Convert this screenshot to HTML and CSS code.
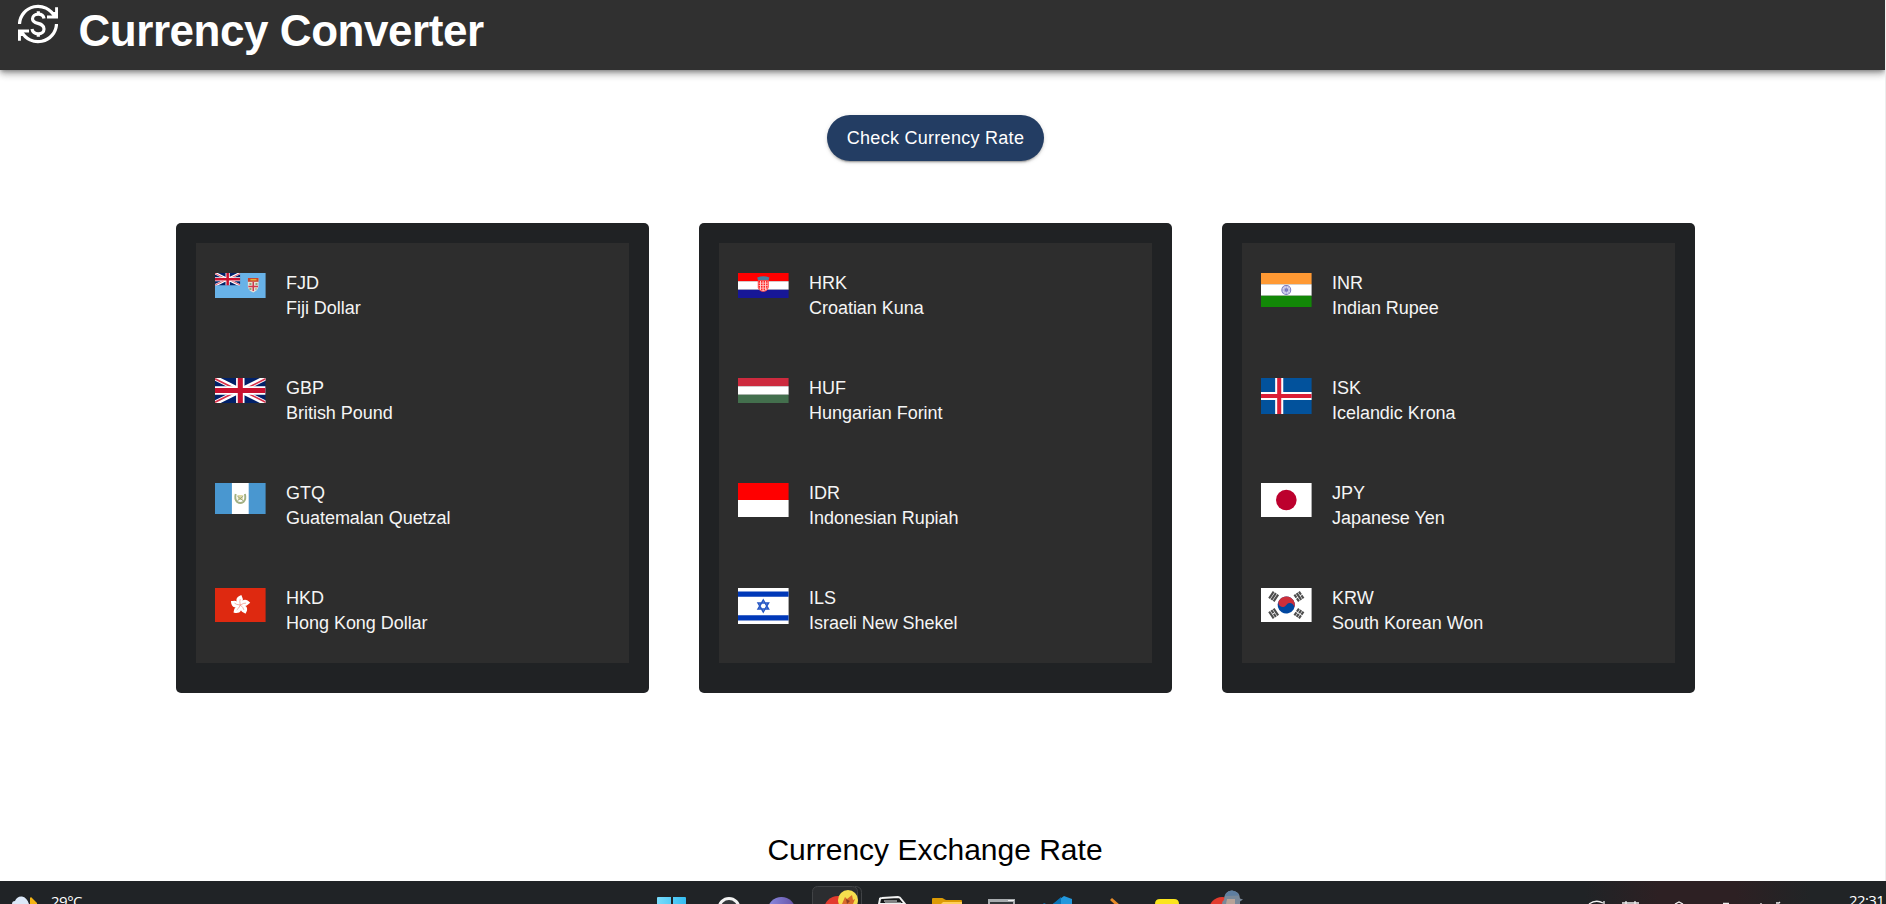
FILE: index.html
```html
<!DOCTYPE html>
<html lang="en">
<head>
<meta charset="utf-8">
<title>Currency Converter</title>
<link rel="stylesheet" href="styles.css">
</head>
<body>
<svg class="defs" width="0" height="0" aria-hidden="true">
  <symbol id="union" viewBox="0 0 60 30" preserveAspectRatio="none">
    <rect width="60" height="30" fill="#012169"/>
    <path d="M0 0L60 30M60 0L0 30" stroke="#fff" stroke-width="6"/>
    <path d="M0 1L28 15M60 1L32 15M0 29L28 15M60 29L32 15" stroke="#d8304a" stroke-width="2"/>
    <path d="M30 0V30M0 15H60" stroke="#fff" stroke-width="10"/>
    <path d="M30 0V30M0 15H60" stroke="#c8102e" stroke-width="6"/>
  </symbol>
</svg>
<div class="page">
<header class="header">
  <svg class="logo" viewBox="0 0 40 40" fill="none" stroke="#fff" stroke-width="3.2">
    <path d="M1.500 20A18.500 18.500 0 0 1 36.500 12.500M38.500 20A18.500 18.500 0 0 1 3.500 27.500"/>
    <path d="M38.700 3.300V13H29M1.300 36.700V27H11" stroke-width="3.200"/>
    <path d="M32 8L38 8V13zM8 32L2 32V27z" fill="#fff" stroke="none"/>
    <path d="M26 14.500C25.500 11.500 23.500 10.200 20.300 10.200C17 10.200 14.500 12 14.500 14.800C14.500 21.500 26 17.200 26 25C26 28 23.500 29.800 20.300 29.800C17 29.800 14.500 28 14 25M20.300 7.200V11M20.300 29V32.800" stroke-width="3.200"/>
  </svg>
  <h1 class="title">Currency Converter</h1>
</header>
<main class="main">
  <button class="check">Check Currency Rate</button>
  <div class="cards">
    <section class="card"><div class="list">
      <div class="row"><svg class="flag" height="25" viewBox="0 0 50 25" preserveAspectRatio="none"><rect width="50" height="25" fill="#68b2e8"/><use href="#union" width="25" height="12.500"/><path d="M32.500 5h10.500v9q-1 4-5.200 5.500q-4.300-1.500-5.300-5.500z" fill="#e6dfd5"/><path d="M32.500 5h10.500v3.800h-10.500z" fill="#c8432e"/><path d="M35 6.700h6" stroke="#e6ae32" stroke-width="1.500"/><path d="M37.800 9v9M33 13.500h9.500" stroke="#cf3a4b" stroke-width="1.500"/><path d="M34 11h2M40 11h2M34 16h2M40 16h1" stroke="#76955f" stroke-width="1.500"/></svg><div class="name">FJD<br>Fiji Dollar</div></div>
      <div class="row"><svg class="flag" height="25" viewBox="0 0 50 25" preserveAspectRatio="none"><use href="#union" width="50" height="25"/></svg><div class="name">GBP<br>British Pound</div></div>
      <div class="row"><svg class="flag" height="31" viewBox="0 0 50 31" preserveAspectRatio="none"><rect width="50" height="31" fill="#4997d0"/><path d="M16.700 0h16.600v31H16.700z" fill="#fff"/><path d="M20.500 11q-1.500 5 1.500 8q3 2 6 0q3-3 1.500-8" fill="none" stroke="#a2b083" stroke-width="1.900"/><path d="M22.500 12h5v5h-5z" fill="#ded9a3"/><path d="M22 18l6-5M28 18l-6-5" stroke="#8c9b78" stroke-width=".8"/></svg><div class="name">GTQ<br>Guatemalan Quetzal</div></div>
      <div class="row"><svg class="flag" height="34" viewBox="0 0 50 34" preserveAspectRatio="none"><rect width="50" height="34" fill="#de2910"/><g fill="#fff" transform="translate(25 17)"><path id="petal" d="M0 0C-5.500-3-5-8 1-10C2-7 4.500-5 0 0z"/><use href="#petal" transform="rotate(72)"/><use href="#petal" transform="rotate(144)"/><use href="#petal" transform="rotate(216)"/><use href="#petal" transform="rotate(288)"/></g><g fill="none" stroke="#ee8577" stroke-width=".6" transform="translate(25 17)"><path id="vein" d="M0 0Q-1-4 0-6"/><use href="#vein" transform="rotate(72)"/><use href="#vein" transform="rotate(144)"/><use href="#vein" transform="rotate(216)"/><use href="#vein" transform="rotate(288)"/></g></svg><div class="name">HKD<br>Hong Kong Dollar</div></div>
    </div></section>
    <section class="card"><div class="list">
      <div class="row"><svg class="flag" height="25" viewBox="0 0 50 25" preserveAspectRatio="none"><path fill="red" d="M0 0h50v8.300H0z"/><path fill="#fff" d="M0 8.300h50v8.400H0z"/><path fill="#171796" d="M0 16.700h50V25H0z"/><path d="M19 4.500q6-2.500 12 0l-1 3.500H20z" fill="#477f9f"/><path d="M20 7.500h10v7q-1 4-5 4t-5-4z" fill="#ffd0d0"/><path d="M21 8v8M23.500 8v10M26 8v10M28.500 8v8" stroke="#f22" stroke-width="1.500" stroke-dasharray="1.700 .8"/><path d="M20 7.500h10v7q-1 4-5 4t-5-4z" fill="none" stroke="#f33" stroke-width=".8"/></svg><div class="name">HRK<br>Croatian Kuna</div></div>
      <div class="row"><svg class="flag" height="25" viewBox="0 0 50 25" preserveAspectRatio="none"><path fill="#cd2a3e" d="M0 0h50v8.300H0z"/><path fill="#fff" d="M0 8.300h50v8.400H0z"/><path fill="#436f4d" d="M0 16.700h50V25H0z"/></svg><div class="name">HUF<br>Hungarian Forint</div></div>
      <div class="row"><svg class="flag" height="34" viewBox="0 0 50 34" preserveAspectRatio="none"><path fill="red" d="M0 0h50v17H0z"/><path fill="#fff" d="M0 17h50v17H0z"/></svg><div class="name">IDR<br>Indonesian Rupiah</div></div>
      <div class="row"><svg class="flag" height="36" viewBox="0 0 50 36" preserveAspectRatio="none"><rect width="50" height="36" fill="#fff"/><path d="M0 3.400h50v5.400H0zM0 27.200h50v5.400H0z" fill="#0038b8"/><path d="M25 12L30.200 21.100H19.800zM25 24L30.200 14.900H19.800z" fill="none" stroke="#2456c4" stroke-width="1.500"/></svg><div class="name">ILS<br>Israeli New Shekel</div></div>
    </div></section>
    <section class="card"><div class="list">
      <div class="row"><svg class="flag" height="34" viewBox="0 0 50 34" preserveAspectRatio="none"><path fill="#f93" d="M0 0h50v11.300H0z"/><path fill="#fff" d="M0 11.300h50v11.400H0z"/><path fill="#128807" d="M0 22.700h50V34H0z"/><circle cx="25" cy="17" r="4.400" fill="#d8d8f0" stroke="#7777bd" stroke-width="1"/><circle cx="25" cy="17" r="1.700" fill="#6666b3"/><path d="M21 17h8M25 13v8M22 14l6 6M28 14l-6 6" stroke="#8888c8" stroke-width=".5"/></svg><div class="name">INR<br>Indian Rupee</div></div>
      <div class="row"><svg class="flag" height="36" viewBox="0 0 50 36" preserveAspectRatio="none"><rect width="50" height="36" fill="#02529c"/><path d="M18 0v36M0 18h50" stroke="#fff" stroke-width="8"/><path d="M18 0v36M0 18h50" stroke="#dc1e35" stroke-width="4"/></svg><div class="name">ISK<br>Icelandic Krona</div></div>
      <div class="row"><svg class="flag" height="34" viewBox="0 0 50 34" preserveAspectRatio="none"><rect width="50" height="34" fill="#fff"/><circle cx="25" cy="17" r="10.200" fill="#bc002d"/></svg><div class="name">JPY<br>Japanese Yen</div></div>
      <div class="row"><svg class="flag" height="34" viewBox="0 0 50 34" preserveAspectRatio="none"><rect width="50" height="34" fill="#fff"/><g transform="rotate(32 25 17)"><circle cx="25" cy="17" r="8.500" fill="#0047a0"/><path d="M16.500 17a8.500 8.500 0 0 1 17 0a4.250 4.250 0 0 0-8.500 0a4.250 4.250 0 0 1-8.500 0" fill="#cd2e3a"/></g><g stroke="#4d4d4d" stroke-width="2.100"><path transform="translate(12.500 8.500) rotate(-56)" d="M-4-2.700h8M-4 0h8M-4 2.700h8"/><path transform="translate(37.500 25.500) rotate(-56)" d="M-4-2.700h3.600M.4-2.700H4M-4 0h3.600M.4 0H4M-4 2.700h3.600M.4 2.700H4"/><path transform="translate(37.500 8.500) rotate(56)" d="M-4-2.700h3.600M.4-2.700H4M-4 0h8M-4 2.700h3.600M.4 2.700H4"/><path transform="translate(12.500 25.500) rotate(56)" d="M-4-2.700h8M-4 0h3.600M.4 0H4M-4 2.700h8"/></g></svg><div class="name">KRW<br>South Korean Won</div></div>
    </div></section>
  </div>
  <h2 class="subtitle">Currency Exchange Rate</h2>
</main>
</div>
<footer class="taskbar">
  <svg class="weather" width="30" height="23" viewBox="0 0 30 23"><path d="M18 17l1-1 6 6v1h-7z" fill="#f5b513"/><path d="M0 23q0-3 3-3q2-5 7-4.500q5 1 7 7.500z" fill="#dce8f8"/></svg>
  <span class="temp">29°C</span>
  <svg class="apps" width="610" height="23" viewBox="650 881 610 23">
    <defs><linearGradient id="win" x2="1"><stop stop-color="#79dcfb"/><stop offset="1" stop-color="#35bdf2"/></linearGradient><linearGradient id="vio" x2="1"><stop stop-color="#8a8ae0"/><stop offset="1" stop-color="#6652a5"/></linearGradient></defs>
    <path d="M657 904v-6q0-1 1-1h13v7zM673 904v-7h12q1 0 1 1v6z" fill="url(#win)"/>
    <circle cx="729" cy="908.500" r="10" fill="#34373a" stroke="#f2f2f2" stroke-width="3"/>
    <circle cx="781.500" cy="911" r="14" fill="url(#vio)"/>
    <path d="M855 886.500q6.500 0 6.500 6V904" fill="none" stroke="#414346"/><rect x="812.500" y="886.500" width="45" height="30" rx="5" fill="#2b2d30" stroke="#414346"/>
    <circle cx="838" cy="910" r="14" fill="#e33b2e"/><circle cx="848" cy="900" r="10" fill="#f6df4e"/><path d="M842 904l3-7 2 2 5-4 1 5 2-1-2 5z" fill="#d96a2b"/><path d="M846 899l4 2-3 3z" fill="#8d3d20"/>
    <path d="M879 904l1-5q0-1 2-1l16-1q2 0 3 2l4 5z" fill="#17191a" stroke="#f1f1f1" stroke-width="2"/><path d="M884 901h13M885 903h16" stroke="#eee" stroke-width="1.200"/>
    <path d="M932 904v-5q0-1 1-1h9q1 0 2 1l2 1h15q1 0 1 1v3z" fill="#dc9b05"/><path d="M941 904l2-2h19v2z" fill="#ffd05b"/>
    <path d="M988 899h27v5h-27z" fill="#a9adb0"/><path d="M990 902h23v2h-23z" fill="#33383b"/><path d="M1008 900.500h6" stroke="#eee"/>
    <path d="M1053 904l11-8 8 3v5z" fill="#2298dd"/><path d="M1053 904l8-7v7z" fill="#0874b8"/><path d="M1043 904l1-1 2 1z" fill="#0874b8"/>
    <path d="M1111 899l9 8" stroke="#e78b28" stroke-width="3"/>
    <path d="M1155 904q0-5 5-5h14q5 0 5 5z" fill="#fbe51d"/>
    <circle cx="1222" cy="910" r="13" fill="#e33b2e"/><path d="M1222 904q0-3 2-4q0-9 8-9.500q8 1 8 8l3 1-3 2v3z" fill="#79899a"/><path d="M1225 896q1-5 7-5.500q6 1 7 5z" fill="#5e7ea0"/><path d="M1227 899h8v5h-9z" fill="#b8a398"/>
  </svg>
  <svg class="tray" width="230" height="23" viewBox="1580 881 230 23" fill="none" stroke="#f2f2f2" stroke-width="1.300">
    <path d="M1589 904q7-5 14-1M1604 901v3M1622 903h17M1626 901v3M1635 901v3M1675 904l4-2 4 2M1723 903.500h6M1761 903v1M1776 903h3l1-1"/>
  </svg>
  <span class="clock">22:31</span>
</footer>
</body>
</html>
```
FILE: styles.css
```css
* { box-sizing: border-box; }
body {
  margin: 0;
  width: 1886px;
  height: 904px;
  overflow: hidden;
  background: #fff;
  font-family: "Liberation Sans", Arial, sans-serif;
}
.defs { display: block; }
.page { height: 881px; border-right: 1px solid #ededed; overflow: hidden; }
.header {
  display: flex;
  height: 70px;
  padding-left: 18px;
  background: #303030;
  box-shadow: 0 2px 4px -1px rgba(0,0,0,.3), 0 4px 7px rgba(0,0,0,.24), 0 1px 10px rgba(0,0,0,.16);
}
.logo { width: 40px; height: 40px; margin-top: 4px; }
.title {
  margin: 5px 0 0 20.500px;
  color: #fff;
  font-size: 44px;
  line-height: 51px;
  font-weight: 700;
  letter-spacing: -.45px;
  white-space: nowrap;
}
.main { display: flex; flex-direction: column; align-items: center; padding-top: 45px; }
.check {
  width: 217px;
  height: 46px;
  margin-right: 14px;
  padding: 0;
  border: 0;
  border-radius: 23px;
  background: #233d63;
  color: #fff;
  font: 18px/46px "Liberation Sans", Arial, sans-serif;
  letter-spacing: .28px;
  white-space: nowrap;
  box-shadow: 0 3px 1px -2px rgba(0,0,0,.2), 0 2px 2px rgba(0,0,0,.14), 0 1px 5px rgba(0,0,0,.12);
}
.cards {
  display: grid;
  grid-template-columns: repeat(3, 473px);
  gap: 50px;
  margin: 62px 14px 0 0;
}
.card { height: 470px; padding: 20px 19.800px; border-radius: 5px; background: #202224; }
.list { background: #2d2d2d; }
.row { display: flex; gap: 20px; height: 105px; padding: 30px 0 0 19.700px; }
.flag { width: 50.600px; flex: none; }
.name {
  margin-top: -2px;
  color: #f5f5f5;
  font-size: 18px;
  line-height: 25px;
  letter-spacing: -.04px;
  white-space: nowrap;
}
.subtitle {
  margin: 139px 15px 0 0;
  font-size: 30px;
  line-height: 35px;
  font-weight: 400;
  white-space: nowrap;
}
.taskbar {
  display: flex;
  height: 23px;
  overflow: hidden;
  padding-left: 12px;
  background: linear-gradient(90deg, #202326 0 84%, #2d2023 88% 92%, #212426 96%);
  color: #fff;
  font: 15px/20px "Open Sans", "Noto Sans", sans-serif;
}
.taskbar svg { flex: none; }
.temp { width: 40px; margin: 10px 0 0 9px; letter-spacing: -.5px; }
.apps { margin-left: 559px; }
.tray { margin-left: 320px; }
.clock { margin: 9px 0 0 39px; letter-spacing: -.6px; }
```
